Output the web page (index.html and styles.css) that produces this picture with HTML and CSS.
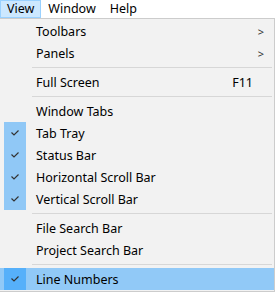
FILE: index.html
```html
<!DOCTYPE html>
<html>
<head>
<meta charset="utf-8">
<link rel="stylesheet" href="styles.css">
</head>
<body>
<div class="menubar">
  <span class="mb-item active">View</span>
  <span class="mb-item">Window</span>
  <span class="mb-item">Help</span>
</div>
<div class="menu">
  <div class="row"><span class="chk"></span><span class="label">Toolbars</span><span class="arrow">&gt;</span></div>
  <div class="row"><span class="chk"></span><span class="label">Panels</span><span class="arrow">&gt;</span></div>
  <div class="sep"></div>
  <div class="row"><span class="chk"></span><span class="label">Full Screen</span><span class="key">F11</span></div>
  <div class="sep"></div>
  <div class="row"><span class="chk"></span><span class="label">Window Tabs</span></div>
  <div class="row checked"><span class="chk"><svg viewBox="0 0 8 6" width="8" height="6"><path d="M0.5 2.5 L3 5 L7.5 0.5" fill="none" stroke="#333" stroke-width="1.2"/></svg></span><span class="label">Tab Tray</span></div>
  <div class="row checked"><span class="chk"><svg viewBox="0 0 8 6" width="8" height="6"><path d="M0.5 2.5 L3 5 L7.5 0.5" fill="none" stroke="#333" stroke-width="1.2"/></svg></span><span class="label">Status Bar</span></div>
  <div class="row checked"><span class="chk"><svg viewBox="0 0 8 6" width="8" height="6"><path d="M0.5 2.5 L3 5 L7.5 0.5" fill="none" stroke="#333" stroke-width="1.2"/></svg></span><span class="label">Horizontal Scroll Bar</span></div>
  <div class="row checked"><span class="chk"><svg viewBox="0 0 8 6" width="8" height="6"><path d="M0.5 2.5 L3 5 L7.5 0.5" fill="none" stroke="#333" stroke-width="1.2"/></svg></span><span class="label">Vertical Scroll Bar</span></div>
  <div class="sep"></div>
  <div class="row"><span class="chk"></span><span class="label">File Search Bar</span></div>
  <div class="row"><span class="chk"></span><span class="label">Project Search Bar</span></div>
  <div class="sep"></div>
  <div class="row checked hover"><span class="chk"><svg viewBox="0 0 8 6" width="8" height="6"><path d="M0.5 2.5 L3 5 L7.5 0.5" fill="none" stroke="#333" stroke-width="1.2"/></svg></span><span class="label">Line Numbers</span></div>
</div>
</body>
</html>
```

FILE: styles.css
```css
html, body {
  margin: 0;
  padding: 0;
}
body {
  width: 277px;
  height: 292px;
  overflow: hidden;
  background: #ffffff;
  font-family: "Noto Sans", "Noto Sans CJK SC", sans-serif;
  font-size: 12.5px;
  color: #000;
}
.menubar {
  display: flex;
  height: 18px;
  background: #ffffff;
}
.mb-item {
  box-sizing: border-box;
  height: 18px;
  line-height: 15px;
  padding: 0 6px;
  border: 1px solid transparent;
}
.mb-item.active {
  background: #cce8ff;
  border-color: #99d1ff;
}
.menu {
  box-sizing: border-box;
  width: 276px;
  margin-left: -1px;
  border: 1px solid #cccccc;
  background: #f2f2f2;
  padding: 1px 0 1px 0;
}
.row {
  display: flex;
  align-items: center;
  height: 22px;
  width: 274px;
}
.chk {
  width: 22px;
  height: 22px;
  margin-left: 4px;
  display: flex;
  align-items: center;
  justify-content: center;
}
.row.checked .chk {
  background: #90c8f6;
}
.row.hover {
  background: #91c9f7;
}
.row.hover .chk {
  background: #56b0fa;
}
.label {
  margin-left: 10px;
  flex: 1;
  white-space: nowrap;
}
.key {
  margin-right: 21px;
}
.arrow {
  margin-right: 10px;
  font-size: 11px;
  color: #333;
}
.sep {
  height: 7px;
  display: flex;
  align-items: center;
}
.sep::before {
  content: "";
  display: block;
  height: 1px;
  margin-left: 32px;
  width: 240px;
  background: #d7d7d7;
}
```
